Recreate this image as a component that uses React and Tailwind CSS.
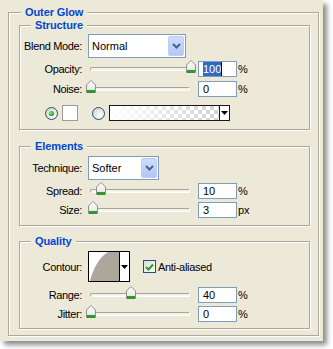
import React from "react";

function Group({ title, className, titleMl, children }) {
  return (
    <div
      className={`flex flex-col border border-[#aca899] shadow-[inset_1px_1px_0_#ffffff,1px_1px_0_#ffffff] ${className}`}
    >
      <span
        className={`-mt-[8px] ${titleMl} w-fit bg-[#ece9d8] px-[4px] text-[11px] font-bold leading-[14px] tracking-[-0.1px] text-[#0046d5]`}
      >
        {title}
      </span>
      {children}
    </div>
  );
}

function Label({ children }) {
  return (
    <span className="w-[62px] shrink-0 text-right leading-[14px] tracking-[-0.35px]">{children}</span>
  );
}

function Thumb({ left }) {
  return (
    <svg
      className="absolute top-[-1px]"
      style={{ left: `${left}px` }}
      width="10"
      height="13"
      viewBox="0 0 10 13"
    >
      <defs>
        <linearGradient id="tg" x1="0" y1="0" x2="0" y2="1">
          <stop offset="0" stopColor="#ffffff" />
          <stop offset="1" stopColor="#e2e2dc" />
        </linearGradient>
      </defs>
      <path d="M0.5 5 L5 0.5 L9.5 5 L9.5 12.5 L0.5 12.5 Z" fill="url(#tg)" stroke="#8e8f8f" />
      <rect x="1" y="10" width="8" height="2" fill="#21a121" />
      <rect x="1" y="12" width="8" height="0.6" fill="#1b7a1b" />
    </svg>
  );
}

function Slider({ v }) {
  return (
    <div className="relative ml-[4px] flex h-[16px] w-[108px] shrink-0 items-center">
      <div className="ml-[4px] h-[4px] w-[100px] rounded-l-[2px] border border-b-white border-l-[#a7a595] border-r-white border-t-[#a7a595] bg-[#f3f2ec]" />
      <Thumb left={v * 0.995} />
    </div>
  );
}

function Field({ children }) {
  return (
    <div className="ml-[4px] flex h-[16px] w-[39px] shrink-0 items-center border border-[#7f9db9] bg-white pl-[4px] leading-[14px]">
      {children}
    </div>
  );
}

function SliderRow({ label, v, value, unit, mt, selected }) {
  return (
    <div className={`flex h-[16px] items-center ${mt}`}>
      <Label>{label}</Label>
      <Slider v={v} />
      <Field>
        {selected ? (
          <>
            <span className="bg-[#316ac5] text-white">{value}</span>
            <span className="h-[14px] w-[1px] bg-black" />
          </>
        ) : (
          <span>{value}</span>
        )}
      </Field>
      <span className="ml-[1px] leading-[14px]">{unit}</span>
    </div>
  );
}

function DropButton() {
  return (
    <div className="m-[1px] flex w-[16px] items-center justify-center rounded-[2px] border border-[#bcccf5] bg-[linear-gradient(to_bottom,#cfdcfd,#b3c7f6)]">
      <svg width="9" height="6" viewBox="0 0 9 6">
        <path d="M1 1 L4.5 4.5 L8 1" fill="none" stroke="#4d6185" strokeWidth="2" />
      </svg>
    </div>
  );
}

function Select({ text, w }) {
  return (
    <div className={`ml-[6px] flex h-[24px] ${w} shrink-0 border border-[#7f9db9] bg-white`}>
      <span className="flex flex-1 items-center pl-[3px] leading-[14px]">{text}</span>
      <DropButton />
    </div>
  );
}

function Radio({ checked }) {
  return (
    <svg width="13" height="13" viewBox="0 0 13 13" className="shrink-0">
      <defs>
        <radialGradient id="rg" cx="0.65" cy="0.65" r="0.7">
          <stop offset="0" stopColor="#ffffff" />
          <stop offset="1" stopColor="#d6d5cc" />
        </radialGradient>
        <radialGradient id="gd" cx="0.4" cy="0.4" r="0.6">
          <stop offset="0" stopColor="#8fe38f" />
          <stop offset="1" stopColor="#1e9a1e" />
        </radialGradient>
      </defs>
      <circle cx="6.5" cy="6.5" r="6" fill="url(#rg)" stroke="#1c5180" />
      {checked && <circle cx="6.5" cy="6.5" r="2.6" fill="url(#gd)" />}
    </svg>
  );
}

function DownTri() {
  return (
    <svg width="7" height="4" viewBox="0 0 7 4">
      <path d="M0 0 L7 0 L3.5 4 Z" fill="#000" />
    </svg>
  );
}

export default function App() {
  return (
    <div className="h-[349px] w-[333px] bg-white font-['Liberation_Sans',Arial,sans-serif] text-[11px] text-black">
      <div className="w-[323px] bg-[#ece9d8] pb-[5px] pl-[8px] pt-[12px] shadow-[4px_4px_5px_rgba(0,0,0,0.45)]">
        <Group title="Outer Glow" className="w-[311px] pb-[6px]" titleMl="ml-[12px]">
          <Group title="Structure" className="ml-[10px] mt-[6px] w-[291px] pb-[8px]" titleMl="ml-[11px]">
            <div className="mt-[2px] flex h-[24px] items-center">
              <Label>Blend Mode:</Label>
              <Select text="Normal" w="w-[98px]" />
            </div>
            <SliderRow label="Opacity:" v={100} value="100" unit="%" mt="mt-[3px]" selected />
            <SliderRow label="Noise:" v={0} value="0" unit="%" mt="mt-[4px]" />
            <div className="mt-[8px] flex h-[16px] items-center">
              <div className="ml-[25px]">
                <Radio checked />
              </div>
              <div className="ml-[4px] h-[16px] w-[16px] border border-[#9c9c9c] bg-white" />
              <div className="ml-[14px]">
                <Radio />
              </div>
              <div className="ml-[4px] flex h-[16px] w-[121px] border border-[#1a1a1a]">
                <div className="flex-1 bg-[linear-gradient(to_right,#ffffff,rgba(255,255,255,0)),repeating-conic-gradient(#d2d2d2_0_25%,#ffffff_0_50%)] [background-size:100%_100%,8px_8px]" />
                <div className="flex w-[10px] items-center justify-center border-l border-[#1a1a1a] bg-white">
                  <DownTri />
                </div>
              </div>
            </div>
          </Group>

          <Group title="Elements" className="ml-[10px] mt-[16px] w-[291px] pb-[7px]" titleMl="ml-[11px]">
            <div className="mt-[3px] flex h-[24px] items-center">
              <Label>Technique:</Label>
              <Select text="Softer" w="w-[71px]" />
            </div>
            <SliderRow label="Spread:" v={10} value="10" unit="%" mt="mt-[3px]" />
            <SliderRow label="Size:" v={2} value="3" unit="px" mt="mt-[3px]" />
          </Group>

          <Group title="Quality" className="ml-[10px] mt-[15px] w-[291px] pb-[6px]" titleMl="ml-[11px]">
            <div className="mt-[3px] flex h-[31px] items-center">
              <Label>Contour:</Label>
              <div className="ml-[6px] flex h-[31px] w-[42px] border border-black bg-white">
                <svg width="30" height="29" viewBox="0 0 30 29" className="shrink-0">
                  <path d="M1 29 C 4 18, 9 6, 19 0 L30 0 L30 29 Z" fill="#aba79b" />
                </svg>
                <div className="flex flex-1 items-center justify-center border-l border-black">
                  <DownTri />
                </div>
              </div>
              <div className="ml-[13px] flex h-[13px] w-[13px] items-center justify-center border border-[#1c5180] bg-[linear-gradient(135deg,#dcdcd7,#ffffff)]">
                <svg width="9" height="8" viewBox="0 0 9 8">
                  <path d="M1 4 L3.5 6.5 L8 1.5" fill="none" stroke="#21a121" strokeWidth="2" />
                </svg>
              </div>
              <span className="ml-[2px] leading-[14px] tracking-[-0.3px]">Anti-aliased</span>
            </div>
            <SliderRow label="Range:" v={40} value="40" unit="%" mt="mt-[5px]" />
            <SliderRow label="Jitter:" v={0} value="0" unit="%" mt="mt-[3px]" />
          </Group>
        </Group>
      </div>
    </div>
  );
}
